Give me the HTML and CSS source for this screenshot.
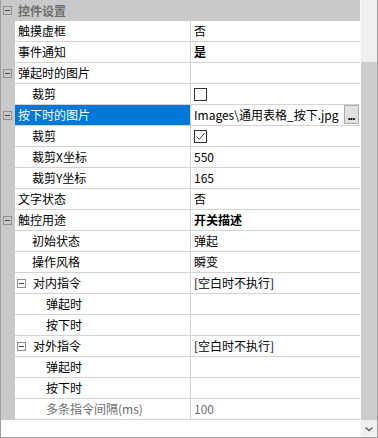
FILE: index.html
```html
<!DOCTYPE html>
<html>
<head>
    <meta charset="utf-8">
    <link rel="stylesheet" href="styles.css">
    <title>属性</title>
</head>
<body>
    <div class="window">
        <div class="props">
            <div class="row cat">
                <div class="gutter"><span class="box"></span></div>
                <div class="cat-name">控件设置</div>
            </div>
            <div class="row">
                <div class="gutter"></div>
                <div class="name l1">触摸虚框</div>
                <div class="value">否</div>
            </div>
            <div class="row">
                <div class="gutter"></div>
                <div class="name l1">事件通知</div>
                <div class="value bold">是</div>
            </div>
            <div class="row">
                <div class="gutter"><span class="box"></span></div>
                <div class="name l1">弹起时的图片</div>
                <div class="value"></div>
            </div>
            <div class="row">
                <div class="gutter"></div>
                <div class="name l2">裁剪</div>
                <div class="value"><span class="check"></span></div>
            </div>
            <div class="row">
                <div class="gutter"><span class="box"></span></div>
                <div class="name l1 selected">按下时的图片</div>
                <div class="value">
                    <span class="path">Images\通用表格_按下.jpg</span>
                    <span class="dots">...</span>
                </div>
            </div>
            <div class="row">
                <div class="gutter"></div>
                <div class="name l2">裁剪</div>
                <div class="value">
                    <span class="check">
                        <svg width="11" height="11" viewBox="0 0 11 11"><path d="M1.5 5.5 L4.3 8.3 L9.5 2.3" fill="none" stroke="#333" stroke-width="1"/></svg>
                    </span>
                </div>
            </div>
            <div class="row">
                <div class="gutter"></div>
                <div class="name l2">裁剪X坐标</div>
                <div class="value">550</div>
            </div>
            <div class="row">
                <div class="gutter"></div>
                <div class="name l2">裁剪Y坐标</div>
                <div class="value">165</div>
            </div>
            <div class="row">
                <div class="gutter"></div>
                <div class="name l1">文字状态</div>
                <div class="value">否</div>
            </div>
            <div class="row">
                <div class="gutter"><span class="box"></span></div>
                <div class="name l1">触控用途</div>
                <div class="value bold">开关描述</div>
            </div>
            <div class="row">
                <div class="gutter"></div>
                <div class="name l2">初始状态</div>
                <div class="value">弹起</div>
            </div>
            <div class="row">
                <div class="gutter"></div>
                <div class="name l2">操作风格</div>
                <div class="value">瞬变</div>
            </div>
            <div class="row">
                <div class="gutter"></div>
                <div class="name sub"><span class="box"></span>对内指令</div>
                <div class="value">[空白时不执行]</div>
            </div>
            <div class="row">
                <div class="gutter"></div>
                <div class="name l3">弹起时</div>
                <div class="value"></div>
            </div>
            <div class="row">
                <div class="gutter"></div>
                <div class="name l3">按下时</div>
                <div class="value"></div>
            </div>
            <div class="row">
                <div class="gutter"></div>
                <div class="name sub"><span class="box"></span>对外指令</div>
                <div class="value">[空白时不执行]</div>
            </div>
            <div class="row">
                <div class="gutter"></div>
                <div class="name l3">弹起时</div>
                <div class="value"></div>
            </div>
            <div class="row">
                <div class="gutter"></div>
                <div class="name l3">按下时</div>
                <div class="value"></div>
            </div>
            <div class="row">
                <div class="gutter"></div>
                <div class="name l3 disabled">多条指令间隔(ms)</div>
                <div class="value disabled">100</div>
            </div>
            <div class="rest"></div>
        </div>
        <div class="scrollbar">
            <div class="thumb"></div>
            <div class="arrow">
                <svg width="16" height="17" viewBox="0 0 16 17"><path d="M4.5 7.5 L8 10.5 L11.5 7.5" fill="none" stroke="#606060" stroke-width="1.4"/></svg>
            </div>
        </div>
    </div>
</body>
</html>
```

FILE: styles.css
```css
body {
    margin: 0;
    font-family: "Noto Sans CJK SC", "Microsoft YaHei", sans-serif;
    font-size: 12px;
    color: #000;
}
.window {
    width: 377px;
    height: 437px;
    display: flex;
    border-right: 1px solid #a0a0a0;
    border-bottom: 1px solid #a0a0a0;
    background: #fff;
}
.props {
    width: 360px;
    display: flex;
    flex-direction: column;
    border-left: 1px solid #a0a0a0;
}
.row {
    display: flex;
    height: 21px;
    flex-shrink: 0;
}
.gutter {
    width: 14px;
    background: #c9c9c9;
    display: flex;
    align-items: center;
    padding-left: 2px;
    box-sizing: border-box;
}
.cat {
    background: #c9c9c9;
}
.cat-name {
    padding-left: 3px;
    line-height: 21px;
    color: #6d6d6d;
    font-weight: bold;
}
.box {
    width: 9px;
    height: 9px;
    box-sizing: border-box;
    border: 1px solid #8f8f8f;
    position: relative;
    flex-shrink: 0;
}
.box::after {
    content: "";
    position: absolute;
    left: 1px;
    top: 3px;
    width: 5px;
    height: 1px;
    background: #444;
}
.name {
    width: 176px;
    box-sizing: border-box;
    border-right: 1px solid #d3d3d3;
    border-bottom: 1px solid #d3d3d3;
    line-height: 20px;
    white-space: nowrap;
    overflow: hidden;
}
.l1 { padding-left: 3px; }
.l2 { padding-left: 17px; }
.l3 { padding-left: 31px; }
.sub {
    display: flex;
    align-items: center;
    gap: 7px;
    padding-left: 2px;
}
.selected {
    background: #0078d7;
    color: #fff;
}
.value {
    flex: 1;
    border-bottom: 1px solid #d3d3d3;
    line-height: 20px;
    padding-left: 3px;
    display: flex;
    align-items: center;
    white-space: nowrap;
}
.bold { font-weight: bold; }
.disabled { color: #6d6d6d; }
.path {
    flex: 1;
    overflow: hidden;
}
.dots {
    width: 15px;
    height: 19px;
    box-sizing: border-box;
    margin-right: 1px;
    margin-top: -1px;
    background: #e1e1e1;
    border: 1px solid #adadad;
    font-weight: bold;
    line-height: 20px;
    text-align: center;
    font-family: "Liberation Sans", sans-serif;
    font-size: 12px;
    letter-spacing: -1px;
    text-indent: -1px;
}
.check {
    width: 13px;
    height: 13px;
    box-sizing: border-box;
    border: 1px solid #333;
    display: flex;
    align-items: center;
    justify-content: center;
}
.rest {
    flex: 1;
}
.scrollbar {
    width: 17px;
    display: flex;
    flex-direction: column;
    background: #f0f0f0;
    border-left: 1px solid #fafafa;
    box-sizing: border-box;
}
.thumb {
    margin-top: 62px;
    height: 358px;
    background: #cdcdcd;
}
.arrow {
    flex: 1;
    display: flex;
    align-items: center;
}
```
